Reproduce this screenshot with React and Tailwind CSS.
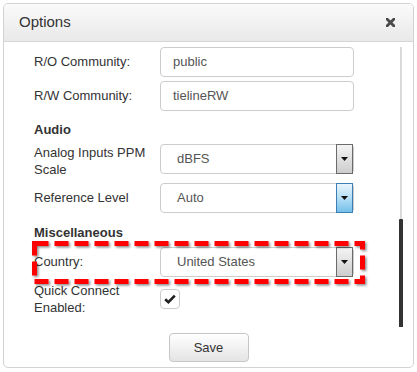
import React from 'react'

const font = { fontFamily: '"Liberation Sans", Arial, sans-serif' }

function TextField({ value }) {
    return (
        <div className="w-[194px] h-[30px] border border-[#cccccc] rounded-[4px] bg-white flex items-center px-[12px] text-[13px] text-[#555555]">
            {value}
        </div>
    )
}

function Arrow() {
    return (
        <svg width="7" height="4" viewBox="0 0 7 4">
            <path d="M0 0 L7 0 L3.5 4 Z" fill="#111111" />
        </svg>
    )
}

function SelectField({ value, active }) {
    return (
        <div className="w-[194px] h-[30px] border border-[#cccccc] rounded-[4px] bg-white flex items-stretch text-[13px] text-[#555555]">
            <div className="flex-1 flex items-center pl-[16px]">{value}</div>
            {active ? (
                <div className="w-[17px] -my-px border border-[#3b7fb4] bg-gradient-to-b from-[#e8f5fd] via-[#b4def6] to-[#74c0ea] flex items-center justify-center">
                    <Arrow />
                </div>
            ) : (
                <div className="w-[17px] -my-px border border-[#6b6b6b] bg-gradient-to-b from-[#f4f4f4] to-[#cdcdcd] flex items-center justify-center">
                    <Arrow />
                </div>
            )}
        </div>
    )
}

export default function App() {
    return (
        <div className="w-[417px] h-[372px] bg-white pt-[3px] pl-[3px]" style={font}>
            <div className="relative w-[411px] h-[365px] border border-[#d2d2d2] rounded-[5px] bg-white flex flex-col overflow-hidden">
                {/* Header */}
                <div className="h-[38px] shrink-0 border-b border-[#d6d6d6] bg-gradient-to-b from-[#fafafa] to-[#e9e9e9] flex items-center justify-between pl-[15px] pr-[18px]">
                    <span className="text-[15px] text-[#333333]">Options</span>
                    <svg width="9" height="9" viewBox="0 0 9 9">
                        <path d="M1 1 L8 8 M8 1 L1 8" stroke="#4a4a4a" strokeWidth="2.8" strokeLinecap="square" />
                    </svg>
                </div>

                {/* Scroll area */}
                <div className="h-[285px] flex">
                    <div className="flex-1 pl-[30px] pt-[5px] text-[13px] text-[#333333]">
                        <div className="flex items-center">
                            <div className="w-[126px]">R/O Community:</div>
                            <TextField value="public" />
                        </div>
                        <div className="flex items-center mt-[4px]">
                            <div className="w-[126px]">R/W Community:</div>
                            <TextField value="tielineRW" />
                        </div>

                        <div className="mt-[10px] mb-[5px] h-[18px] leading-[18px] font-bold">Audio</div>
                        <div className="flex items-start">
                            <div className="w-[126px] leading-[17px]">Analog Inputs PPM Scale</div>
                            <SelectField value="dBFS" />
                        </div>
                        <div className="flex items-center mt-[5px]">
                            <div className="w-[126px]">Reference Level</div>
                            <SelectField value="Auto" active />
                        </div>

                        <div className="mt-[11px] mb-[5px] h-[18px] leading-[18px] font-bold">Miscellaneous</div>
                        <div className="flex items-center">
                            <div className="w-[126px]">Country:</div>
                            <SelectField value="United States" />
                        </div>
                        <div className="flex items-start mt-[5px]">
                            <div className="w-[126px] leading-[17px]">Quick Connect Enabled:</div>
                            <div className="mt-[7px] w-[20px] h-[20px] border border-[#cccccc] rounded-[4px] bg-white flex items-center justify-center">
                                <svg width="12" height="10" viewBox="0 0 12 10">
                                    <path d="M1.2 5.2 L4.4 8.2 L10.8 1.6" fill="none" stroke="#222222" strokeWidth="2.6" />
                                </svg>
                            </div>
                        </div>
                    </div>

                    {/* Scrollbar */}
                    <div className="w-[4px] mr-[10px] pt-[5px] flex flex-col items-center">
                        <div className="w-[2px] h-[172px] bg-[#dadada]"></div>
                        <div className="w-[4px] h-[108px] bg-[#333333] rounded-t-[1px]"></div>
                    </div>
                </div>

                {/* Footer */}
                <div className="flex justify-center pt-[6px]">
                    <button className="w-[80px] h-[29px] border border-[#c6c6c6] rounded-[4px] bg-gradient-to-b from-white to-[#e4e4e4] text-[13px] text-[#333333]">
                        Save
                    </button>
                </div>

                {/* Highlight annotation */}
                <svg className="absolute left-0 top-0 pointer-events-none" width="411" height="365">
                    <defs>
                        <filter id="sh" x="-10%" y="-30%" width="120%" height="160%">
                            <feDropShadow dx="1.5" dy="1.5" stdDeviation="1.2" floodColor="#000" floodOpacity="0.45" />
                        </filter>
                    </defs>
                    <rect x="30.5" y="239.5" width="328" height="38" fill="none" stroke="#ff0000" strokeWidth="5" strokeDasharray="14 6" filter="url(#sh)" />
                </svg>
            </div>
        </div>
    )
}
